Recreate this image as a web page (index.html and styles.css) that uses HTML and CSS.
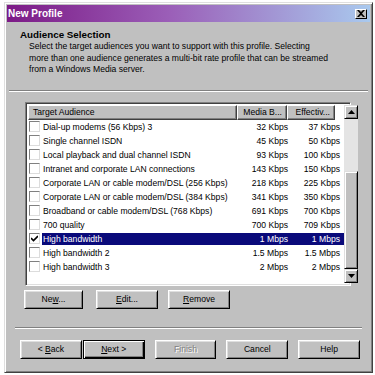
FILE: index.html
```html
<!DOCTYPE html>
<html>
<head>
    <title>New Profile</title>
    <link rel="stylesheet" href="styles.css">
</head>
<body>
    <div class="window">
        <div class="titlebar">
            <span class="title">New Profile</span>
            <span class="close">
                <svg width="8" height="7" viewBox="0 0 8 7"><path d="M0 0 L2 0 L4 2 L6 0 L8 0 L5 3.5 L8 7 L6 7 L4 5 L2 7 L0 7 L3 3.5 Z" fill="#000"/></svg>
            </span>
        </div>
        <div class="header">
            <div class="heading">Audience Selection</div>
            <p class="desc">Select the target audiences you want to support with this profile. Selecting more than one audience generates a multi-bit rate profile that can be streamed from a Windows Media server.</p>
        </div>
        <div class="sep"></div>
        <div class="listbox">
            <div class="list">
                <div class="cols">
                    <div class="col c1">Target Audience</div>
                    <div class="col c2">Media B...</div>
                    <div class="col c3">Effectiv...</div>
                </div>
                <div class="row"><span class="chk"></span><span class="cell name">Dial-up modems (56 Kbps) 3</span><span class="cell v1">32 Kbps</span><span class="cell v2">37 Kbps</span></div>
                <div class="row"><span class="chk"></span><span class="cell name">Single channel ISDN</span><span class="cell v1">45 Kbps</span><span class="cell v2">50 Kbps</span></div>
                <div class="row"><span class="chk"></span><span class="cell name">Local playback and dual channel ISDN</span><span class="cell v1">93 Kbps</span><span class="cell v2">100 Kbps</span></div>
                <div class="row"><span class="chk"></span><span class="cell name">Intranet and corporate LAN connections</span><span class="cell v1">143 Kbps</span><span class="cell v2">150 Kbps</span></div>
                <div class="row"><span class="chk"></span><span class="cell name">Corporate LAN or cable modem/DSL (256 Kbps)</span><span class="cell v1">218 Kbps</span><span class="cell v2">225 Kbps</span></div>
                <div class="row"><span class="chk"></span><span class="cell name">Corporate LAN or cable modem/DSL (384 Kbps)</span><span class="cell v1">341 Kbps</span><span class="cell v2">350 Kbps</span></div>
                <div class="row"><span class="chk"></span><span class="cell name">Broadband or cable modem/DSL (768 Kbps)</span><span class="cell v1">691 Kbps</span><span class="cell v2">700 Kbps</span></div>
                <div class="row"><span class="chk"></span><span class="cell name">700 quality</span><span class="cell v1">700 Kbps</span><span class="cell v2">709 Kbps</span></div>
                <div class="row selected"><span class="chk"><svg width="7" height="7" viewBox="0 0 7 7"><path d="M0 3 L2.5 5.5 L7 1" fill="none" stroke="#000" stroke-width="1.6"/></svg></span><span class="cell name">High bandwidth</span><span class="cell v1">1 Mbps</span><span class="cell v2">1 Mbps</span></div>
                <div class="row"><span class="chk"></span><span class="cell name">High bandwidth 2</span><span class="cell v1">1.5 Mbps</span><span class="cell v2">1.5 Mbps</span></div>
                <div class="row"><span class="chk"></span><span class="cell name">High bandwidth 3</span><span class="cell v1">2 Mbps</span><span class="cell v2">2 Mbps</span></div>
            </div>
            <div class="scrollbar">
                <div class="arrow">
                    <svg width="7" height="4" viewBox="0 0 7 4"><path d="M3.5 0 L7 4 L0 4 Z" fill="#000"/></svg>
                </div>
                <div class="track"></div>
                <div class="thumb"></div>
                <div class="arrow">
                    <svg width="7" height="4" viewBox="0 0 7 4"><path d="M0 0 L7 0 L3.5 4 Z" fill="#000"/></svg>
                </div>
            </div>
        </div>
        <div class="actions">
            <button class="btn b-new">Ne<u>w</u>...</button>
            <button class="btn b-edit"><u>E</u>dit...</button>
            <button class="btn b-remove"><u>R</u>emove</button>
        </div>
        <div class="sep sep-bottom"></div>
        <div class="nav">
            <button class="btn">&lt; <u>B</u>ack</button>
            <button class="btn default"><u>N</u>ext &gt;</button>
            <button class="btn disabled">Finish</button>
            <button class="btn">Cancel</button>
            <button class="btn">Help</button>
        </div>
    </div>
</body>
</html>
```

FILE: styles.css
```css
body{
    margin: 0;
    background: #fff;
    font-family: "Liberation Sans", Arial, sans-serif;
    font-size: 8.6px;
    color: #000;
}

.window{
    margin: 2px 0 0 4px;
    width: 363px;
    height: 365px;
    background: #c0c0c0;
    border: 1px solid;
    border-color: #dfdfdf #404040 #404040 #dfdfdf;
    box-shadow: inset 1px 1px #fff, inset -1px -1px #808080;
    padding: 2px;
    box-sizing: content-box;
}

.titlebar{
    height: 17px;
    display: flex;
    align-items: center;
    justify-content: space-between;
    padding: 0 3px 0 1px;
    background: linear-gradient(to right, #7c1a86, #9b5fb8 45%, #a9c9ee);
}

.title{
    color: #fff;
    font-weight: bold;
    font-size: 10px;
}

.close{
    width: 12px;
    height: 10px;
    display: flex;
    align-items: center;
    justify-content: center;
    background: #c0c0c0;
    border: 1px solid;
    border-color: #fff #000 #000 #fff;
    box-sizing: border-box;
}

.header{
    padding: 6px 0 0 13px;
}

.heading{
    font-weight: bold;
    font-size: 9.8px;
    line-height: 13px;
}

.desc{
    margin: 0;
    padding: 0 40px 0 9px;
    line-height: 11.5px;
}

.sep{
    margin: 14px 2px 0 2px;
    height: 0;
    border-top: 1px solid #808080;
    border-bottom: 1px solid #fff;
}

.listbox{
    margin: 10px 0 0 18px;
    width: 326px;
    height: 184px;
    display: flex;
    background: #fff;
    border: 1px solid;
    border-color: #808080 #fff #fff #808080;
    box-shadow: inset 1px 1px #404040, inset -1px -1px #dfdfdf;
    padding: 2px;
    box-sizing: border-box;
}

.list{
    flex: 1;
}

.cols{
    display: flex;
    height: 15px;
}

.col{
    background: #c0c0c0;
    border: 1px solid;
    border-color: #fff #404040 #404040 #fff;
    box-shadow: inset -1px -1px #808080;
    line-height: 13px;
    padding: 0 4px;
    box-sizing: border-box;
    white-space: nowrap;
    overflow: hidden;
}

.c1{
    width: 209px;
}

.c2{
    width: 50px;
    text-align: right;
}

.c3{
    width: 48px;
    text-align: right;
}

.row{
    display: flex;
    align-items: center;
    height: 14px;
}

.chk{
    width: 9px;
    height: 9px;
    margin: 0 2px 0 1px;
    flex: none;
    display: flex;
    align-items: center;
    justify-content: center;
    border: 1px solid;
    border-color: #808080 #dcdcdc #dcdcdc #808080;
    background: #fff;
}

.cell{
    line-height: 12px;
    white-space: nowrap;
    overflow: hidden;
}

.name{
    width: 195px;
    padding-left: 1px;
}

.v1{
    width: 50px;
    text-align: right;
    padding-right: 4px;
}

.v2{
    width: 48px;
    text-align: right;
    padding-right: 4px;
}

.row.selected .cell{
    background: #0a0a7a;
    color: #fff;
}

.scrollbar{
    width: 14px;
    display: flex;
    flex-direction: column;
    flex: none;
}

.arrow{
    height: 14px;
    display: flex;
    align-items: center;
    justify-content: center;
    background: #c0c0c0;
    border: 1px solid;
    border-color: #dfdfdf #000 #000 #dfdfdf;
    box-shadow: inset 1px 1px #fff, inset -1px -1px #808080;
    box-sizing: border-box;
}

.track{
    height: 52px;
    background: #e4e4e4;
}

.thumb{
    flex: 1;
    background: #c0c0c0;
    border: 1px solid;
    border-color: #dfdfdf #000 #000 #dfdfdf;
    box-shadow: inset 1px 1px #fff, inset -1px -1px #808080;
}

.actions{
    display: flex;
    gap: 10px;
    margin: 4px 0 0 17px;
}

.nav{
    display: flex;
    margin: 11px 0 0 13px;
}

.btn{
    width: 62px;
    height: 19px;
    padding: 0;
    font-family: "Liberation Sans", Arial, sans-serif;
    font-size: 8.6px;
    color: #000;
    background: #c0c0c0;
    border: 1px solid;
    border-color: #fff #000 #000 #fff;
    box-shadow: inset 1px 1px #dfdfdf, inset -1px -1px #808080;
}

.b-new{
    width: 59px;
}

.b-edit{
    margin-left: 3px;
}

.nav .btn{
    margin-right: 10px;
}

.nav .btn:first-child{
    margin-right: 1px;
}

.btn.default{
    border: 1px solid #000;
    box-shadow: inset 1px 1px #fff, inset -1px -1px #000, inset -2px -2px #808080;
}

.btn.disabled{
    color: #808080;
    text-shadow: 1px 1px #fff;
}

.sep-bottom{
    margin: 18px 8px 0 8px;
}
```
